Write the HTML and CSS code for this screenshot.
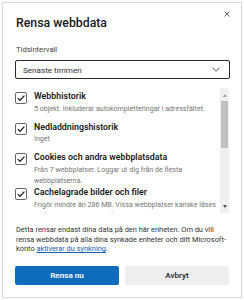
FILE: index.html
```html
<!DOCTYPE html>
<html lang="sv">
<head>
<meta charset="utf-8">
<title>Rensa webbdata</title>
<link rel="stylesheet" href="styles.css">
</head>
<body>
<div class="dialog">
  <div class="header">
    <h1 class="title">Rensa webbdata</h1>
    <button class="close" aria-label="Stäng">
      <svg width="6" height="6" viewBox="0 0 6 6"><path d="M0.5 0.5 L5.5 5.5 M5.5 0.5 L0.5 5.5" stroke="#555" stroke-width="0.9" fill="none"/></svg>
    </button>
  </div>
  <div class="label">Tidsintervall</div>
  <div class="select">
    <span>Senaste timmen</span>
    <svg width="8" height="5" viewBox="0 0 8 5"><path d="M0.5 0.7 L4 4.2 L7.5 0.7" stroke="#444" stroke-width="0.9" fill="none"/></svg>
  </div>
  <div class="list">
    <div class="items">
      <div class="item">
        <span class="cb"><svg width="10" height="10" viewBox="0 0 10 10"><path d="M1.8 5.2 L4 7.4 L8.4 2.6" stroke="#111" stroke-width="1.2" fill="none"/></svg></span>
        <div class="text"><div class="t">Webbhistorik</div><div class="s">5 objekt. Inkluderar autokompletteringar i adressfältet.</div></div>
      </div>
      <div class="item">
        <span class="cb"><svg width="10" height="10" viewBox="0 0 10 10"><path d="M1.8 5.2 L4 7.4 L8.4 2.6" stroke="#111" stroke-width="1.2" fill="none"/></svg></span>
        <div class="text"><div class="t">Nedladdningshistorik</div><div class="s">Inget</div></div>
      </div>
      <div class="item">
        <span class="cb"><svg width="10" height="10" viewBox="0 0 10 10"><path d="M1.8 5.2 L4 7.4 L8.4 2.6" stroke="#111" stroke-width="1.2" fill="none"/></svg></span>
        <div class="text"><div class="t">Cookies och andra webbplatsdata</div><div class="s">Från 7 webbplatser. Loggar ut dig från de flesta webbplatserna.</div></div>
      </div>
      <div class="item">
        <span class="cb"><svg width="10" height="10" viewBox="0 0 10 10"><path d="M1.8 5.2 L4 7.4 L8.4 2.6" stroke="#111" stroke-width="1.2" fill="none"/></svg></span>
        <div class="text"><div class="t">Cachelagrade bilder och filer</div><div class="s">Frigör mindre än 286 MB. Vissa webbplatser kanske läses in långsammare nästa gång.</div></div>
      </div>
    </div>
    <div class="scrollbar">
      <span class="arrow-area"><span class="arrow up"></span></span>
      <span class="thumb"></span>
      <span class="spacer"></span>
      <span class="arrow-area bottom"><span class="arrow down"></span></span>
    </div>
  </div>
  <p class="note"><span>Detta rensar endast dina data på den här enheten. Om du vill</span> <span>rensa webbdata på alla dina synkade enheter och ditt Microsoft-</span><span>konto <a href="#" class="link">aktiverar du synkning</a>.</span></p>
  <div class="buttons">
    <button class="btn primary">Rensa nu</button>
    <button class="btn secondary">Avbryt</button>
  </div>
</div>
</body>
</html>
```
FILE: styles.css
```css
html, body {
  margin: 0;
  padding: 0;
  background: #ffffff;
}
body {
  font-family: Roboto, "Liberation Sans", sans-serif;
  color: #1b1b1b;
}
.dialog {
  box-sizing: border-box;
  margin: 2px;
  width: 240px;
  height: 296px;
  border: 1px solid #dadada;
  background: #fff;
  padding: 12px 11px 0 12px;
  display: flex;
  flex-direction: column;
  box-shadow: 0 0 2px rgba(0,0,0,0.08);
}
.header {
  display: flex;
  justify-content: space-between;
  align-items: flex-start;
}
.title {
  margin: 0;
  padding-left: 1px;
  font-size: 12.3px;
  line-height: 16px;
  font-weight: 500;
  color: #1a1a1a;
}
.close {
  border: 0;
  padding: 0;
  background: none;
  width: 6px;
  height: 6px;
  margin: -4px 0 0 0;
  display: block;
}
.close svg { display: block; }
.label {
  margin-top: 14px;
  padding-left: 1px;
  font-size: 7.6px;
  line-height: 10px;
  color: #444;
}
.select {
  margin-top: 5px;
  box-sizing: border-box;
  height: 19px;
  border: 1px solid #2b2b2b;
  border-radius: 2px;
  padding: 0 9px 0 7px;
  display: flex;
  align-items: center;
  justify-content: space-between;
  font-size: 8.1px;
  color: #333;
}
.select svg { display: block; }
.list {
  margin-top: 9px;
  height: 125px;
  display: flex;
  margin-right: 1px;
}
.items {
  flex: 1;
  overflow: hidden;
  padding-top: 3px;
}
.item {
  display: flex;
  gap: 7px;
  min-height: 30.6px;
  align-items: flex-start;
}
.cb {
  box-sizing: border-box;
  width: 12px;
  height: 12px;
  flex: 0 0 12px;
  margin-top: 1px;
  border: 1px solid #666;
  border-radius: 2px;
  display: flex;
  align-items: center;
  justify-content: center;
}
.cb svg { display: block; }
.text {
  flex: 1;
  min-width: 0;
}
.t {
  font-size: 8.8px;
  font-weight: 600;
  line-height: 11.6px;
  color: #1b1b1b;
}
.s {
  font-size: 7.1px;
  line-height: 11.6px;
  color: #767676;
}
.scrollbar {
  width: 9px;
  flex: 0 0 9px;
  background: #f0f0f0;
  display: flex;
  flex-direction: column;
  align-items: center;
}
.arrow-area {
  height: 12px;
  width: 9px;
  display: flex;
  align-items: center;
  justify-content: center;
  flex: 0 0 12px;
}
.arrow-area.bottom { height: 13px; flex-basis: 13px; }
.arrow {
  width: 0;
  height: 0;
  border-left: 2.5px solid transparent;
  border-right: 2.5px solid transparent;
}
.arrow.up { border-bottom: 3px solid #a0a0a0; margin-top: 2px; }
.arrow.down { border-top: 3px solid #505050; margin-bottom: 1px; }
.thumb {
  margin-top: 1px;
  width: 7px;
  height: 47px;
  background: #c1c1c1;
  flex: 0 0 47px;
}
.spacer { flex: 1; }
.note {
  margin: 12px 0 0 0;
  padding-left: 1px;
  width: 212px;
  font-size: 7.4px;
  line-height: 9.6px;
  color: #333;
}
.link {
  color: #1560b0;
  text-decoration: underline;
}
.buttons {
  margin-top: 12px;
  display: flex;
  gap: 6px;
}
.btn {
  box-sizing: border-box;
  width: 104px;
  height: 19px;
  border: 0;
  border-radius: 2px;
  font-family: Roboto, "Liberation Sans", sans-serif;
  font-size: 8.1px;
  font-weight: 600;
  padding: 0;
}
.primary {
  background: #0f6cbd;
  color: #fff;
}
.secondary {
  background: #efefef;
  color: #1b1b1b;
  font-weight: 500;
}
```
